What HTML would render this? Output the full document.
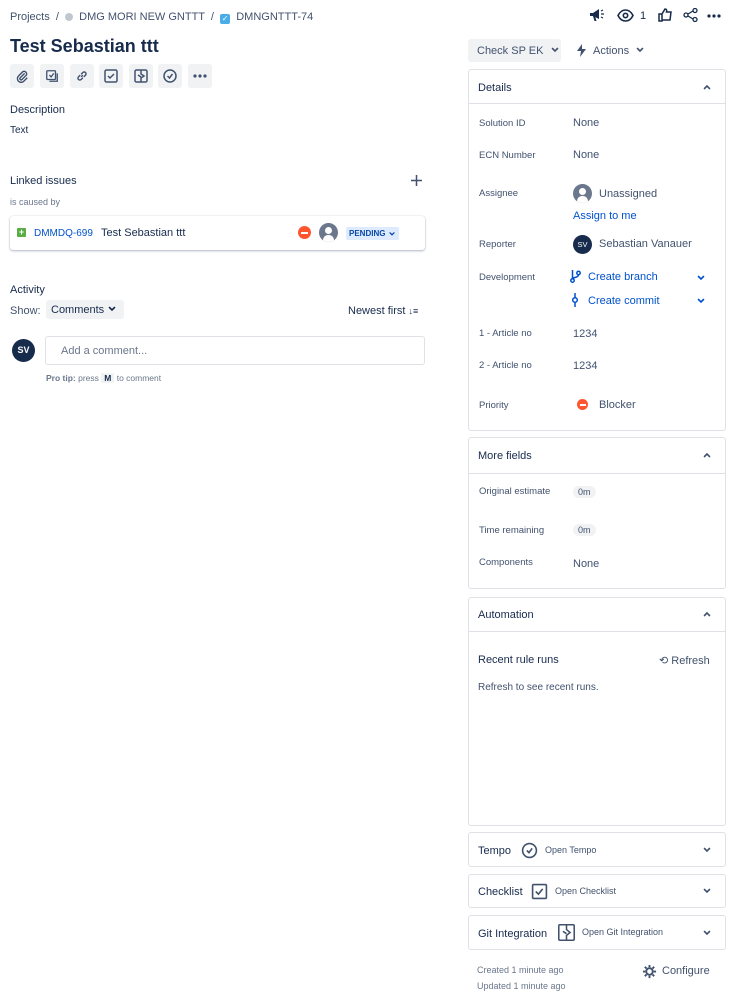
<!DOCTYPE html><html><head><style>
*{margin:0;padding:0;box-sizing:border-box}
body{width:736px;height:999px;background:#fff;font-family:"Liberation Sans",sans-serif;color:#172b4d;position:relative;overflow:hidden;font-size:11px}
.a{position:absolute;white-space:nowrap}
.box{position:absolute;left:468px;width:258px;border:1px solid #dfe1e6;border-radius:3px}
.hd{position:absolute;left:0;right:0;border-bottom:1px solid #dfe1e6}
.lbl{position:absolute;left:10px;font-size:9.5px;color:#42526e}
.val{position:absolute;left:104px;font-size:11px;color:#42526e}
.ib{position:absolute;top:64px;width:24px;height:24px;background:#f1f2f4;border-radius:3px;display:flex;align-items:center;justify-content:center}
.chip{background:#f1f2f4;border-radius:8px;padding:1px 5px;font-size:9px}
.cv{display:inline-block;vertical-align:middle}
</style></head><body>
<svg width="0" height="0" style="position:absolute"><defs><symbol id="dn" viewBox="0 0 10 10"><path d="M2.5 3.5 5 6l2.5-2.5" fill="none" stroke="currentColor" stroke-width="1.6" stroke-linecap="round"/></symbol><symbol id="up" viewBox="0 0 10 10"><path d="M2.5 6.5 5 4l2.5 2.5" fill="none" stroke="currentColor" stroke-width="1.6" stroke-linecap="round"/></symbol></defs></svg>
<div class="a" style="left:10px;top:11px;font-size:11px;color:#42526e">Projects &nbsp;/ &nbsp;<span style="display:inline-block;width:8px;height:8px;border-radius:50%;background:#c1c7d0;vertical-align:-1px"></span>&nbsp; DMG MORI NEW GNTTT &nbsp;/ &nbsp;<span style="display:inline-block;width:10px;height:10px;border-radius:2px;background:#4bade8;color:#fff;font-size:8px;text-align:center;line-height:10px;vertical-align:-1px">✓</span>&nbsp; DMNGNTTT-74</div>
<div class="a" style="left:10px;top:36px;font-size:18px;font-weight:bold;color:#172b4d">Test Sebastian ttt</div>
<div class="ib" style="left:10px"><svg width="14" height="14" viewBox="0 0 16 16" fill="none" stroke="#42526e" stroke-width="1.6"><path d="M11 5 6 10a1.4 1.4 0 0 0 2 2l5-5a3 3 0 0 0-4-4L4 8a4.2 4.2 0 0 0 6 6l4-4"/></svg></div>
<div class="ib" style="left:40px"><svg width="14" height="14" viewBox="0 0 16 16" fill="none" stroke="#42526e" stroke-width="1.5"><rect x="2" y="2" width="10" height="10" rx="1"/><path d="M5 7l2 2 3-4M14 5v9H5"/></svg></div>
<div class="ib" style="left:70px"><svg width="14" height="14" viewBox="0 0 16 16" fill="none" stroke="#42526e" stroke-width="1.6"><path d="M7 9l2-2M6 7 4 9a2 2 0 0 0 3 3l2-2M10 9l2-2a2 2 0 0 0-3-3L7 6"/></svg></div>
<div class="ib" style="left:99px"><svg width="16" height="16" viewBox="0 0 16 16" fill="none" stroke="#42526e" stroke-width="1.5"><rect x="2" y="2" width="12" height="12" rx="1.5"/><path d="M5 8l2 2 4-4"/></svg></div>
<div class="ib" style="left:129px"><svg width="16" height="16" viewBox="0 0 16 16" fill="none" stroke="#42526e" stroke-width="1.5"><rect x="2" y="2" width="12" height="12" rx="1.5"/><path d="M8 2v4l3 2-3 2v4M5 7l3 2"/></svg></div>
<div class="ib" style="left:158px"><svg width="16" height="16" viewBox="0 0 16 16" fill="none" stroke="#42526e" stroke-width="1.5"><circle cx="8" cy="8" r="6"/><path d="M5.5 8l2 2 3-4"/></svg></div>
<div class="ib" style="left:188px"><svg width="14" height="4" viewBox="0 0 14 4" fill="#42526e"><circle cx="2" cy="2" r="1.6"/><circle cx="7" cy="2" r="1.6"/><circle cx="12" cy="2" r="1.6"/></svg></div>
<div class="a" style="left:10px;top:104px;font-size:11px">Description</div>
<div class="a" style="left:10px;top:125px;font-size:10px">Text</div>
<div class="a" style="left:10px;top:175px;font-size:11px">Linked issues</div>
<svg class="a" style="left:411px;top:175px" width="11" height="11" viewBox="0 0 11 11" stroke="#42526e" stroke-width="1.5"><path d="M5.5 0v11M0 5.5h11"/></svg>
<div class="a" style="left:10px;top:197px;font-size:9px;color:#6b778c">is caused by</div>
<div class="a" style="left:10px;top:216px;width:415px;height:34px;border-radius:3px;box-shadow:0 1px 2px rgba(9,30,66,.3),0 0 1px rgba(9,30,66,.2)"></div>
<div class="a" style="left:17px;top:228px;width:9px;height:9px;background:#5aac44;border-radius:1px;color:#fff;font-size:9px;line-height:9px;text-align:center;font-weight:bold">+</div>
<div class="a" style="left:34px;top:228px;font-size:10px;color:#0052cc">DMMDQ-699</div>
<div class="a" style="left:101px;top:227px;font-size:11px">Test Sebastian ttt</div>
<div class="a" style="left:298px;top:226px;width:13px;height:13px;border-radius:50%;background:#ff5630"><div style="position:absolute;left:3px;top:5.5px;width:7px;height:2px;background:#fff"></div></div>
<div class="a" style="left:319px;top:223px;width:19px;height:19px;border-radius:50%;background:#6b778c;overflow:hidden"><div style="position:absolute;left:6px;top:4px;width:7px;height:7px;border-radius:50%;background:#fff"></div><div style="position:absolute;left:4px;top:12px;width:11px;height:8px;border-radius:5px 5px 0 0;background:#fff"></div></div>
<div class="a" style="left:346px;top:227px;height:13px;padding:0 3px;background:#deebff;color:#0747a6;font-size:8px;font-weight:bold;line-height:13px;border-radius:2px">PENDING <svg class="cv" width="8" height="8"><use href="#dn"/></svg></div>
<div class="a" style="left:10px;top:284px;font-size:11px">Activity</div>
<div class="a" style="left:10px;top:305px;font-size:11px;color:#42526e">Show:</div>
<div class="a" style="left:46px;top:300px;width:78px;height:19px;background:#f1f2f4;border-radius:3px;font-size:11px;padding:4px 5px">Comments <svg class="cv" width="10" height="10" style="margin-top:-2px"><use href="#dn"/></svg></div>
<div class="a" style="left:348px;top:305px;font-size:11px">Newest first <span style="font-size:9px">↓≡</span></div>
<div class="a" style="left:12px;top:339px;width:23px;height:23px;border-radius:50%;background:#172b4d;color:#fff;font-size:9px;font-weight:bold;text-align:center;line-height:23px">SV</div>
<div class="a" style="left:45px;top:336px;width:380px;height:29px;border:1px solid #dfe1e6;border-radius:3px;font-size:11px;color:#6b778c;padding:8px 15px">Add a comment...</div>
<div class="a" style="left:46px;top:373px;font-size:8.5px;color:#6b778c"><b>Pro tip:</b> press <span style="background:#f1f2f4;padding:0 3px;font-weight:bold;color:#172b4d">M</span> to comment</div>

<svg class="a" style="left:589px;top:8px" width="16" height="14" viewBox="0 0 16 14" fill="#172b4d"><path d="M1 5h3l6-4v10L4 8H1z"/><path d="M4 8l1.5 5h2L6 8z"/><path d="M12 3l2-1M12 6h3M12 9l2 1" stroke="#172b4d" stroke-width="1.2"/></svg>
<svg class="a" style="left:617px;top:9px" width="17" height="13" viewBox="0 0 17 13" fill="none" stroke="#172b4d" stroke-width="1.6"><path d="M1 6.5C3 2.5 6 1 8.5 1S14 2.5 16 6.5C14 10.5 11 12 8.5 12S3 10.5 1 6.5z"/><circle cx="8.5" cy="6.5" r="2.2"/></svg>
<div class="a" style="left:640px;top:10px;font-size:11px">1</div>
<svg class="a" style="left:658px;top:8px" width="14" height="14" viewBox="0 0 14 14" fill="none" stroke="#172b4d" stroke-width="1.5"><path d="M1 6h3v7H1zM4 6l3-5c1.5 0 2 1 1.5 3H13l-1 8H4"/></svg>
<svg class="a" style="left:683px;top:8px" width="15" height="14" viewBox="0 0 15 14" fill="none" stroke="#172b4d" stroke-width="1.3"><circle cx="3" cy="7" r="2"/><circle cx="12" cy="2.5" r="2"/><circle cx="12" cy="11.5" r="2"/><path d="M5 6l5-3M5 8l5 3"/></svg>
<svg class="a" style="left:707px;top:14px" width="14" height="4" viewBox="0 0 14 4" fill="#172b4d"><circle cx="2" cy="2" r="1.6"/><circle cx="7" cy="2" r="1.6"/><circle cx="12" cy="2" r="1.6"/></svg>

<div class="a" style="left:468px;top:39px;width:93px;height:23px;background:#f1f2f4;border-radius:3px;font-size:11px;color:#42526e;padding:6px 9px">Check SP EK &nbsp;<svg class="cv" width="10" height="10" style="margin-top:-2px"><use href="#dn"/></svg></div>
<svg class="a" style="left:577px;top:44px" width="9" height="13" viewBox="0 0 9 13" fill="#42526e"><path d="M5 0 0 7h4l-1 6 6-8H5z"/></svg>
<div class="a" style="left:593px;top:45px;font-size:11px;color:#42526e">Actions &nbsp;<svg class="cv" width="10" height="10" style="margin-top:-2px"><use href="#dn"/></svg></div>

<div class="box" style="top:69px;height:362px">
<div class="hd" style="top:0;height:34px"></div>
<div class="a" style="left:9px;top:12px;font-size:11px">Details</div><svg class="a" style="left:233px;top:12px;color:#42526e" width="10" height="10"><use href="#up"/></svg>
<div class="lbl" style="top:48px">Solution ID</div><div class="val" style="top:47px">None</div>
<div class="lbl" style="top:80px">ECN Number</div><div class="val" style="top:79px">None</div>
<div class="lbl" style="top:118px">Assignee</div>
<div class="a" style="left:104px;top:114px;width:19px;height:19px;border-radius:50%;background:#6b778c;overflow:hidden"><div style="position:absolute;left:6px;top:4px;width:7px;height:7px;border-radius:50%;background:#fff"></div><div style="position:absolute;left:4px;top:12px;width:11px;height:8px;border-radius:5px 5px 0 0;background:#fff"></div></div>
<div class="val" style="left:130px;top:118px">Unassigned</div>
<div class="val" style="top:140px;color:#0052cc">Assign to me</div>
<div class="lbl" style="top:169px">Reporter</div>
<div class="a" style="left:104px;top:165px;width:19px;height:19px;border-radius:50%;background:#172b4d;color:#fff;font-size:7.5px;text-align:center;line-height:19px">SV</div>
<div class="val" style="left:130px;top:168px">Sebastian Vanauer</div>
<div class="lbl" style="top:202px">Development</div>
<svg class="a" style="left:101px;top:199px" width="11" height="14" viewBox="0 0 11 14" fill="none" stroke="#0052cc" stroke-width="1.5"><circle cx="2.5" cy="11.5" r="1.7"/><circle cx="8.5" cy="4" r="1.7"/><path d="M2.5 1v8.8M8.5 5.7C8.5 9 2.5 8 2.5 10"/></svg>
<div class="val" style="left:119px;top:201px;color:#0052cc">Create branch</div><svg class="a" style="left:227px;top:203px;color:#0052cc" width="10" height="10"><use href="#dn"/></svg>
<svg class="a" style="left:102px;top:223px" width="8" height="14" viewBox="0 0 8 14" fill="none" stroke="#0052cc" stroke-width="1.5"><circle cx="4" cy="7" r="2.3"/><path d="M4 0v4.7M4 9.3V14"/></svg>
<div class="val" style="left:119px;top:225px;color:#0052cc">Create commit</div><svg class="a" style="left:227px;top:226px;color:#0052cc" width="10" height="10"><use href="#dn"/></svg>
<div class="lbl" style="top:258px">1 - Article no</div><div class="val" style="top:258px">1234</div>
<div class="lbl" style="top:290px">2 - Article no</div><div class="val" style="top:290px">1234</div>
<div class="lbl" style="top:330px">Priority</div>
<div class="a" style="left:108px;top:329px;width:11px;height:11px;border-radius:50%;background:#ff5630"><div style="position:absolute;left:2.5px;top:4.5px;width:6px;height:2px;background:#fff"></div></div>
<div class="val" style="left:130px;top:329px">Blocker</div>
</div>

<div class="box" style="top:437px;height:152px">
<div class="hd" style="top:0;height:36px"></div>
<div class="a" style="left:9px;top:12px;font-size:11px">More fields</div><svg class="a" style="left:233px;top:12px;color:#42526e" width="10" height="10"><use href="#up"/></svg>
<div class="lbl" style="top:48px">Original estimate</div><div class="val" style="top:48px"><span class="chip">0m</span></div>
<div class="lbl" style="top:87px">Time remaining</div><div class="val" style="top:86px"><span class="chip">0m</span></div>
<div class="lbl" style="top:119px">Components</div><div class="val" style="top:120px">None</div>
</div>

<div class="box" style="top:597px;height:229px">
<div class="hd" style="top:0;height:34px"></div>
<div class="a" style="left:9px;top:11px;font-size:11px">Automation</div><svg class="a" style="left:233px;top:11px;color:#42526e" width="10" height="10"><use href="#up"/></svg>
<div class="a" style="left:9px;top:56px;font-size:11px">Recent rule runs</div>
<div class="a" style="left:190px;top:56px;font-size:11px;color:#42526e">⟲ Refresh</div>
<div class="a" style="left:9px;top:84px;font-size:10px;color:#42526e">Refresh to see recent runs.</div>
</div>

<div class="box" style="top:832px;height:35px">
<div class="a" style="left:9px;top:12px;font-size:11px">Tempo</div>
<svg class="a" style="left:52px;top:9px" width="17" height="17" viewBox="0 0 16 16" fill="none" stroke="#42526e" stroke-width="1.5"><circle cx="8" cy="8" r="6.5"/><path d="M5.5 8l2 2 3-4"/></svg>
<div class="a" style="left:76px;top:12px;font-size:9px;color:#42526e">Open Tempo</div><svg class="a" style="left:233px;top:12px;color:#42526e" width="10" height="10"><use href="#dn"/></svg>
</div>
<div class="box" style="top:874px;height:34px">
<div class="a" style="left:9px;top:11px;font-size:11px">Checklist</div>
<svg class="a" style="left:62px;top:8px" width="17" height="17" viewBox="0 0 16 16" fill="none" stroke="#42526e" stroke-width="1.5"><rect x="1.5" y="1.5" width="13" height="13" rx="1"/><path d="M4.5 8l2.5 2.5 4-5"/></svg>
<div class="a" style="left:86px;top:11px;font-size:9px;color:#42526e">Open Checklist</div><svg class="a" style="left:233px;top:11px;color:#42526e" width="10" height="10"><use href="#dn"/></svg>
</div>
<div class="box" style="top:915px;height:35px">
<div class="a" style="left:9px;top:12px;font-size:11px">Git Integration</div>
<svg class="a" style="left:88px;top:7px" width="19" height="19" viewBox="0 0 16 16" fill="none" stroke="#42526e" stroke-width="1.3"><rect x="1.5" y="1.5" width="13" height="13" rx="1"/><path d="M8 1.5v4l3 2.5-3 2.5v4M5 7l3 2"/></svg>
<div class="a" style="left:113px;top:11px;font-size:9px;color:#42526e">Open Git Integration</div><svg class="a" style="left:233px;top:12px;color:#42526e" width="10" height="10"><use href="#dn"/></svg>
</div>
<div class="a" style="left:477px;top:965px;font-size:9px;color:#6b778c">Created 1 minute ago</div>
<div class="a" style="left:477px;top:981px;font-size:9px;color:#6b778c">Updated 1 minute ago</div>
<svg class="a" style="left:642px;top:964px" width="15" height="15" viewBox="0 0 16 16" fill="none" stroke="#42526e" stroke-width="2"><circle cx="8" cy="8" r="3.5"/><path d="M8 1v2.5M8 12.5V15M1 8h2.5M12.5 8H15M3 3l1.8 1.8M11.2 11.2 13 13M3 13l1.8-1.8M11.2 4.8 13 3"/></svg>
<div class="a" style="left:662px;top:965px;font-size:11px;color:#42526e">Configure</div>
</body></html>
